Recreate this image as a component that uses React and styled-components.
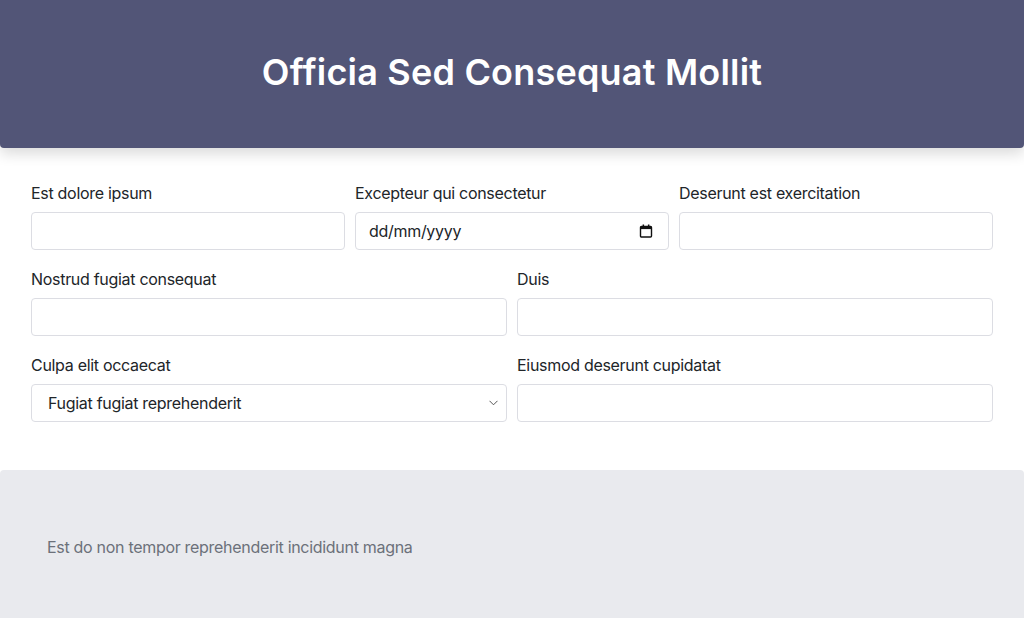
import styled, { createGlobalStyle } from 'styled-components';

const GlobalStyle = createGlobalStyle`
  html, body {
    margin: 0;
    padding: 0;
    background: #ffffff;
    font-family: Inter, "Helvetica Neue", Arial, sans-serif;
    color: #212529;
  }
  * { box-sizing: border-box; }
`;

const Page = styled.div`
  display: flex;
  flex-direction: column;
  min-height: 618px;
`;

const Header = styled.header`
  height: 148px;
  background: #525577;
  border-radius: 0 0 4px 4px;
  box-shadow: 0 6px 14px rgba(0, 0, 0, 0.14);
  display: flex;
  align-items: center;
  justify-content: center;
  position: relative;
  z-index: 1;
`;

const Title = styled.h1`
  margin: 0;
  color: #ffffff;
  font-size: 36px;
  font-weight: 600;
  letter-spacing: 0.2px;
  padding-bottom: 4px;
`;

const Form = styled.form`
  padding: 32px 31px 32px;
  display: flex;
  flex-direction: column;
  gap: 16px;
  margin-bottom: 16px;
`;

const Row = styled.div`
  display: grid;
  grid-template-columns: repeat(${(p) => p.$cols}, 1fr);
  gap: 10px;
`;

const Field = styled.div`
  display: flex;
  flex-direction: column;
`;

const Label = styled.label`
  font-size: 16px;
  line-height: 24px;
  padding-top: 1px;
  margin-bottom: 7px;
  color: #212529;
  letter-spacing: -0.3px;
`;

const Input = styled.input`
  height: 38px;
  width: 100%;
  border: 1px solid #dcdde3;
  border-radius: 4px;
  padding: 0 ${(p) => (p.$icon ? '36px' : '13px')} 0 13px;
  font-family: Inter, "Helvetica Neue", Arial, sans-serif;
  font-size: 16px;
  letter-spacing: -0.3px;
  color: #212529;
  background: #fff;
  outline: none;

  &::placeholder {
    color: #212529;
    opacity: 1;
  }
`;

const Control = styled.div`
  position: relative;
`;

const Select = styled.select`
  height: 38px;
  width: 100%;
  border: 1px solid #dcdde3;
  border-radius: 4px;
  padding: 0 30px 0 16px;
  font-family: Inter, "Helvetica Neue", Arial, sans-serif;
  font-size: 16px;
  letter-spacing: -0.3px;
  color: #212529;
  background: #fff;
  appearance: none;
  -webkit-appearance: none;
  outline: none;
`;

const Chevron = styled.svg`
  position: absolute;
  right: 9px;
  top: 16px;
  width: 9px;
  height: 6px;
  pointer-events: none;
`;

const CalendarIcon = styled.svg`
  position: absolute;
  right: 16px;
  top: 12px;
  width: 14px;
  height: 14px;
  pointer-events: none;
`;

const Footer = styled.footer`
  flex: 1;
  background: #e9eaee;
  border-radius: 4px 4px 0 0;
  padding: 65px 47px 40px;
`;

const FooterText = styled.p`
  margin: 0;
  font-size: 16px;
  line-height: 24px;
  letter-spacing: -0.3px;
  color: #6c717a;
`;

export default function App() {
  return (
    <>
      <GlobalStyle />
      <Page>
        <Header>
          <Title>Officia Sed Consequat Mollit</Title>
        </Header>
        <Form onSubmit={(e) => e.preventDefault()}>
          <Row $cols={3}>
            <Field>
              <Label>Est dolore ipsum</Label>
              <Input type="text" />
            </Field>
            <Field>
              <Label>Excepteur qui consectetur</Label>
              <Control>
                <Input type="text" placeholder="dd/mm/yyyy" $icon />
                <CalendarIcon viewBox="0 0 14 14">
                  <rect x="1.5" y="2.5" width="11" height="10.5" rx="1" fill="none" stroke="#111" strokeWidth="1.4" />
                  <rect x="1.5" y="2.5" width="11" height="2.6" fill="#111" />
                  <rect x="3.6" y="0.5" width="1.5" height="3" fill="#111" />
                  <rect x="8.9" y="0.5" width="1.5" height="3" fill="#111" />
                </CalendarIcon>
              </Control>
            </Field>
            <Field>
              <Label>Deserunt est exercitation</Label>
              <Input type="text" />
            </Field>
          </Row>
          <Row $cols={2}>
            <Field>
              <Label>Nostrud fugiat consequat</Label>
              <Input type="text" />
            </Field>
            <Field>
              <Label>Duis</Label>
              <Input type="text" />
            </Field>
          </Row>
          <Row $cols={2}>
            <Field>
              <Label>Culpa elit occaecat</Label>
              <Control>
                <Select defaultValue="a">
                  <option value="a">Fugiat fugiat reprehenderit</option>
                </Select>
                <Chevron viewBox="0 0 9 6">
                  <path d="M0.5 0.8 L4.5 4.8 L8.5 0.8" fill="none" stroke="#555" strokeWidth="1" />
                </Chevron>
              </Control>
            </Field>
            <Field>
              <Label>Eiusmod deserunt cupidatat</Label>
              <Input type="text" />
            </Field>
          </Row>
        </Form>
        <Footer>
          <FooterText>Est do non tempor reprehenderit incididunt magna</FooterText>
        </Footer>
      </Page>
    </>
  );
}
